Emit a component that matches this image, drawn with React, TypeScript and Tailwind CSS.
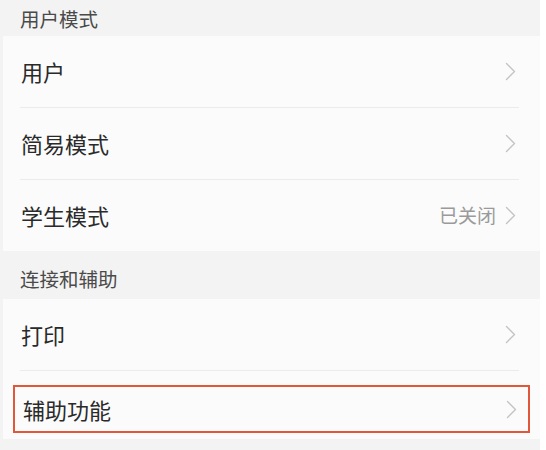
import React from "react";

const font = { fontFamily: '"Noto Sans CJK SC", "Noto Sans", sans-serif' };

function Chevron() {
  return (
    <svg width="11" height="19" viewBox="0 0 11 19" fill="none" className="shrink-0">
      <polyline points="1.5,1.5 9.5,9.5 1.5,17.5" stroke="#c4c4c4" strokeWidth="1.4" strokeLinecap="round" strokeLinejoin="round" />
    </svg>
  );
}

function Row({ label, value, divider }: { label: string; value?: string; divider?: boolean }) {
  return (
    <div className="ml-[3px] bg-[#fbfbfb]">
      <div className="h-[71px] flex items-center pl-[18px] pr-[24px]">
        <span className="flex-1 text-[22px] text-[#2a2a2a]">{label}</span>
        {value && <span className="text-[19px] text-[#9a9a9a] mr-[9px]">{value}</span>}
        <Chevron />
      </div>
      {divider && <div className="ml-[17px] mr-[21px] h-px bg-[#ebebeb]" />}
    </div>
  );
}

export default function App() {
  return (
    <div className="w-[546px] h-[450px] bg-white overflow-hidden" style={font}>
      <div className="w-[540px] h-[450px] bg-[#f3f3f3] flex flex-col">
        <div className="h-[36px] flex items-center pl-[20px] pt-[1px] text-[19.5px] text-[#4a4a4a]">用户模式</div>
        <Row label="用户" divider />
        <Row label="简易模式" divider />
        <Row label="学生模式" value="已关闭" />
        <div className="h-[48px] flex items-center pl-[20px] pt-[7px] text-[19.5px] text-[#4a4a4a]">连接和辅助</div>
        <Row label="打印" divider />
        <div className="ml-[3px] bg-[#fbfbfb] h-[68px] pt-[14px] pb-[6px] pl-[10px] pr-[10px]">
          <div className="h-[48px] border-2 border-[#e0573b] flex items-center pl-[8px] pr-[11px]">
            <span className="flex-1 text-[22px] text-[#2a2a2a]">辅助功能</span>
            <Chevron />
          </div>
        </div>
      </div>
    </div>
  );
}
